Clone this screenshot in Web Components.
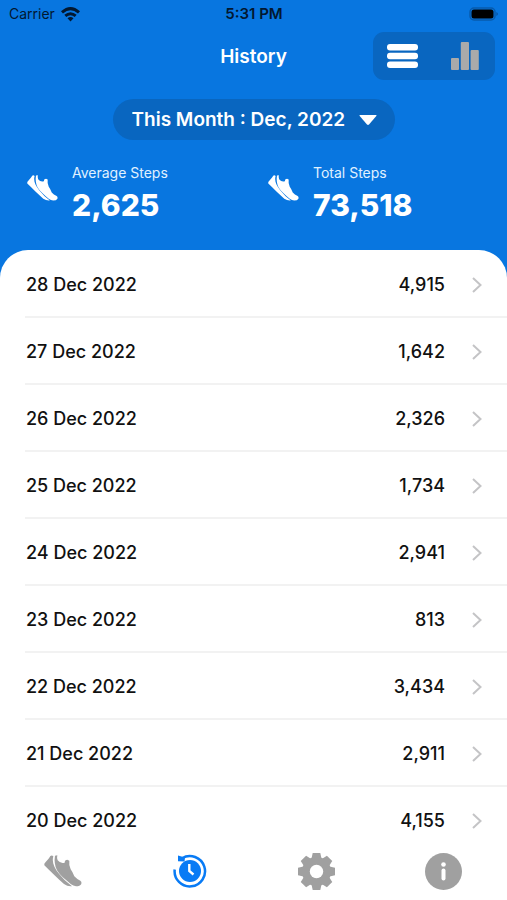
<!DOCTYPE html>
<html lang="en">
<head>
<meta charset="utf-8">
<meta name="viewport" content="width=device-width, initial-scale=1">
<title>History</title>
<style>
  body { margin: 0; font-family: Inter, "Liberation Sans", sans-serif; background: #0876e0; }
</style>
</head>
<body>
<history-app></history-app>
<script>
const define = (name, html) => {
  const template = document.createElement('template');
  template.innerHTML = '<style>*{box-sizing:border-box}svg{display:block}button,select{font:inherit;border:0;margin:0;padding:0;background:none;color:inherit}</style>' + html;
  customElements.define(name, class extends HTMLElement {
    constructor() {
      super();
      this.attachShadow({ mode: 'open' }).append(template.content.cloneNode(true));
    }
  });
};

define('shoe-icon', `
  <style>:host{display:block;width:31px;flex:none} svg{width:100%;height:auto}</style>
  <svg viewBox="47 44 114 96" fill="currentColor" aria-hidden="true">
    <path d="M48 70C54 62 61 57 66 47Q71 43 75 48C70 65 77 82 92 100Q108 121 131 137.500Q118 139 107 131C87 114 67 93 48 75Z"/>
    <path d="M80 46L87 45Q85 53 88 60Q97 71 109 67Q109 58 117 58L123 61Q121 76 127 87Q133 95 138 108Q145 116 156 121Q161 124 159 131Q155 138 143 138Q135 137 128 132C110 117 94 104 86 90Q76 70 80 46Z"/>
  </svg>`);

define('status-bar', `
  <style>
    :host{display:grid;grid-template-columns:1fr auto 1fr;align-items:center;height:28px;padding:0 8px 0 9px;color:#021831;font-size:14px;line-height:18px}
    .carrier{display:flex;align-items:center;gap:6px}
    time{font-weight:600;font-size:15px}
    .battery{justify-self:end}
  </style>
  <span class="carrier"><span>Carrier</span>
    <svg width="19" height="15" viewBox="0 0 19 15" fill="none" stroke="currentColor" stroke-width="3" aria-hidden="true"><path d="M1 5.400Q9.500-2.200 18 5.400M4.300 8.900Q9.500 4.500 14.700 8.900"/><path d="M6.500 11.200Q9.500 8.700 12.500 11.200L9.500 14.400Z" fill="currentColor" stroke="none"/></svg>
  </span>
  <time>5:31 PM</time>
  <svg class="battery" width="30" height="15" viewBox="0 0 30 15" aria-hidden="true"><rect x="1" y="1" width="25" height="12" rx="4" fill="none" stroke="#075bac" stroke-width="1.500"/><rect x="2.500" y="2.500" width="22" height="9" rx="2.500" fill="#000"/><path d="M27.500 5Q30 7 27.500 9Z" fill="#064b91"/></svg>`);

define('view-toggle', `
  <style>
    :host{display:flex;width:122px;height:48px;border-radius:11px;background:#0966c0}
    button{flex:1;display:grid;place-items:center;color:#fff}
    button + button{color:#aaa}
  </style>
  <button type="button" aria-label="List view" aria-pressed="true"><svg width="34" height="24" viewBox="0 0 34 24" fill="currentColor"><rect width="31" height="6.500" rx="3"/><rect y="8.700" width="31" height="6.500" rx="3"/><rect y="17.500" width="31" height="6.500" rx="3"/></svg></button>
  <button type="button" aria-label="Chart view" aria-pressed="false"><svg width="28" height="28" viewBox="0 0 28 28" fill="currentColor"><rect y="16" width="8" height="12" rx="1"/><rect x="9.800" width="8.200" height="28" rx="1"/><rect x="19.600" y="8" width="8.200" height="20" rx="1"/></svg></button>`);

define('month-picker', `
  <style>
    :host{display:block;position:relative;color:#fff}
    select{appearance:none;height:41px;padding:0 48px 0 19px;border-radius:21px;background:#0966c0;font-size:19px;font-weight:600;line-height:24px}
    option{color:#111}
    svg{position:absolute;right:18px;top:16px;pointer-events:none}
  </style>
  <select aria-label="Month"><option>This Month : Dec, 2022</option></select>
  <svg width="18" height="10" viewBox="0 0 18 10" fill="currentColor" aria-hidden="true"><path d="M1 0H17Q18 0 17.300 1L10 9.500Q9 10.300 8 9.500L.7 1Q0 0 1 0Z"/></svg>`);

define('step-stat', `
  <style>
    :host{display:flex;gap:14px;color:#fff}
    shoe-icon{margin-top:11px}
    dl{margin:0} dd{margin:0;font-size:30px;font-weight:800;line-height:36px}
    dt{font-size:14px;line-height:18px;padding-bottom:5px;color:#e0f1ff}
  </style>
  <shoe-icon></shoe-icon>
  <dl><dt><slot name="label"></slot></dt><dd><slot></slot></dd></dl>`);

define('day-row', `
  <style>
    :host{display:block;margin-left:25px;border-bottom:2px solid #f2f2f2}
    a{display:flex;align-items:center;height:65px;padding:2px 25px 0 1px;color:#111;text-decoration:none;font-size:18px;line-height:24px;font-weight:500}
    .steps{margin-left:auto}
    svg{margin-left:27px;color:#c4c4c6}
  </style>
  <a href="#"><span><slot></slot></span><span class="steps"><slot name="steps"></slot></span>
  <svg width="10" height="16" viewBox="0 0 10 16" fill="none" stroke="currentColor" stroke-width="2" aria-hidden="true"><path d="M1 1L8.500 8L1 15"/></svg></a>`);

define('tab-bar', `
  <style>
    :host{display:block;background:#fff}
    nav{display:grid;grid-template-columns:repeat(4,1fr);height:58px;color:#a0a0a0}
    a{display:grid;place-items:center;color:inherit}
    .on{color:#087bf5}
    shoe-icon{width:38px}
  </style>
  <nav aria-label="Main">
    <a href="#" aria-label="Steps"><shoe-icon></shoe-icon></a>
    <a href="#" class="on" aria-label="History" aria-current="page"><svg width="34" height="34" viewBox="0 0 34 34"><circle cx="17" cy="17" r="11" fill="currentColor"/><path d="M1.700 15.500A15.200 15.200 0 1 0 9 4.200" fill="none" stroke="currentColor" stroke-width="2.500"/><path d="M5 1.500L12 3.500L11.500 7.500L5 7.200Z" fill="currentColor"/><path d="M16.300 10V17L20.500 20.500" fill="none" stroke="#fff" stroke-width="2.400"/></svg></a>
    <a href="#" aria-label="Settings"><svg width="37" height="37" viewBox="-18.500 -18.500 37 37"><g fill="currentColor"><circle r="14.500"/><path d="M-5-13L-3.800-18.500H3.800L5-13ZM-5 13L-3.800 18.500H3.800L5 13Z"/><path transform="rotate(45)" d="M-5-13L-3.800-18.500H3.800L5-13ZM-5 13L-3.800 18.500H3.800L5 13Z"/><path transform="rotate(90)" d="M-5-13L-3.800-18.500H3.800L5-13ZM-5 13L-3.800 18.500H3.800L5 13Z"/><path transform="rotate(135)" d="M-5-13L-3.800-18.500H3.800L5-13ZM-5 13L-3.800 18.500H3.800L5 13Z"/></g><circle r="6.700" fill="#fff"/></svg></a>
    <a href="#" aria-label="Information"><svg width="37" height="37" viewBox="0 0 37 37"><circle cx="18.500" cy="18.500" r="18.500" fill="currentColor"/><circle cx="18.500" cy="11.500" r="2.300" fill="#fff"/><path d="M18.500 17.500V25.500" stroke="#fff" stroke-width="4" stroke-linecap="round"/></svg></a>
  </nav>`);

const days = [['28','4,915'],['27','1,642'],['26','2,326'],['25','1,734'],['24','2,941'],['23','813'],['22','3,434'],['21','2,911'],['20','4,155']];

define('history-app', `
  <style>
    :host{display:flex;flex-direction:column;height:100vh;background:#0876e0}
    header{flex:none;color:#fff}
    .title{display:grid;grid-template-columns:1fr auto 1fr;align-items:center;padding:4px 12px 0}
    h1{grid-column:2;margin:0;padding-top:2px;font-size:19px;line-height:24px;font-weight:600}
    view-toggle{justify-self:end}
    .month{display:flex;justify-content:center;padding-top:19px}
    .stats{display:grid;grid-template-columns:241px 1fr;padding:24px 0 27px 27px}
    main{flex:1;min-height:0;overflow:hidden;padding-top:1px;background:#fff;border-radius:28px 28px 0 0}
    tab-bar{flex:none}
  </style>
  <header>
    <status-bar></status-bar>
    <div class="title"><h1>History</h1><view-toggle></view-toggle></div>
    <div class="month"><month-picker></month-picker></div>
    <div class="stats">
      <step-stat><span slot="label">Average Steps</span>2,625</step-stat>
      <step-stat><span slot="label">Total Steps</span>73,518</step-stat>
    </div>
  </header>
  <main>${days.map(([d, n]) => `<day-row>${d} Dec 2022<span slot="steps">${n}</span></day-row>`).join('')}</main>
  <tab-bar></tab-bar>`);
</script>
</body>
</html>
